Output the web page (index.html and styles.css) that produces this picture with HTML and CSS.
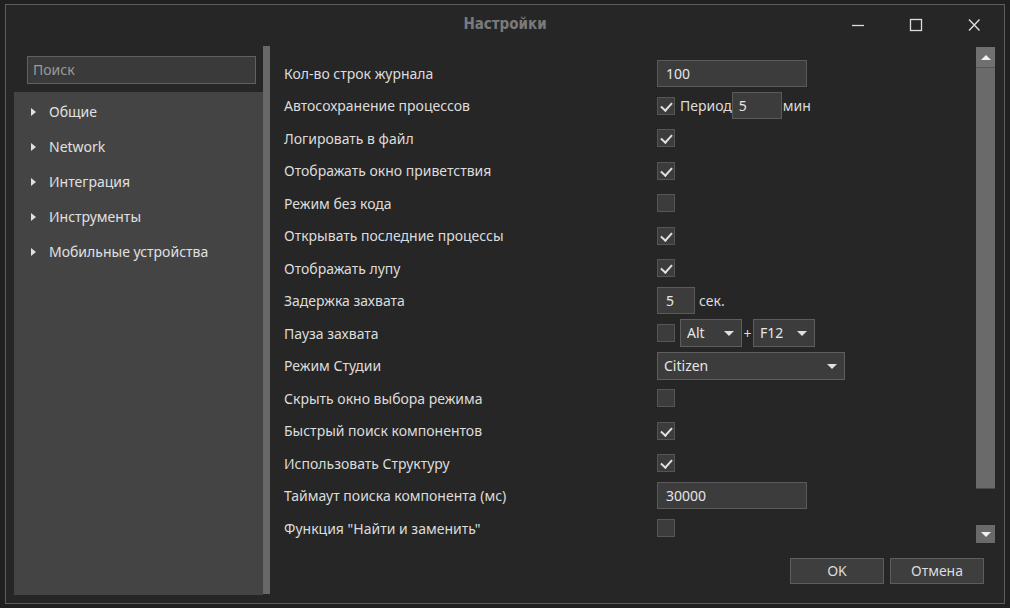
FILE: index.html
```html
<!DOCTYPE html>
<html lang="ru">
<head>
<meta charset="utf-8">
<title>Настройки</title>
<link rel="stylesheet" href="styles.css">
</head>
<body>
<div class="desk">
  <div class="window">
    <div class="titlebar">
      <div class="title">Настройки</div>
      <div class="controls">
        <span class="ctl"><svg width="14" height="14" viewBox="0 0 14 14"><path d="M1 7.5H13" stroke="#dcdcdc" stroke-width="1.3"/></svg></span>
        <span class="ctl"><svg width="14" height="14" viewBox="0 0 14 14"><rect x="1.5" y="1.5" width="11" height="11" fill="none" stroke="#dcdcdc" stroke-width="1.3"/></svg></span>
        <span class="ctl"><svg width="14" height="14" viewBox="0 0 14 14"><path d="M2 1.5L12.5 12.5M12.5 1.5L2 12.5" stroke="#dcdcdc" stroke-width="1.4"/></svg></span>
      </div>
    </div>
    <div class="main">
      <div class="left">
        <div class="search">Поиск</div>
        <div class="tree">
          <div class="node"><span class="arrow"></span>Общие</div>
          <div class="node"><span class="arrow"></span>Network</div>
          <div class="node"><span class="arrow"></span>Интеграция</div>
          <div class="node"><span class="arrow"></span>Инструменты</div>
          <div class="node"><span class="arrow"></span>Мобильные устройства</div>
        </div>
      </div>
      <div class="splitter"></div>
      <div class="right">
        <div class="scrollarea">
          <div class="rows">
            <div class="row"><div class="label">Кол-во строк журнала</div><div class="ctrl"><div class="input w150">100</div></div></div>
            <div class="row"><div class="label">Автосохранение процессов</div><div class="ctrl"><span class="cb on"></span><span class="txt">Период</span><div class="input w50">5</div><span class="txt t1">мин</span></div></div>
            <div class="row"><div class="label">Логировать в файл</div><div class="ctrl"><span class="cb on"></span></div></div>
            <div class="row"><div class="label">Отображать окно приветствия</div><div class="ctrl"><span class="cb on"></span></div></div>
            <div class="row"><div class="label">Режим без кода</div><div class="ctrl"><span class="cb"></span></div></div>
            <div class="row"><div class="label">Открывать последние процессы</div><div class="ctrl"><span class="cb on"></span></div></div>
            <div class="row"><div class="label">Отображать лупу</div><div class="ctrl"><span class="cb on"></span></div></div>
            <div class="row"><div class="label">Задержка захвата</div><div class="ctrl"><div class="input w38">5</div><span class="txt t4">сек.</span></div></div>
            <div class="row"><div class="label">Пауза захвата</div><div class="ctrl"><span class="cb"></span><div class="select w62">Alt<span class="caret"></span></div><span class="plus">+</span><div class="select w62">F12<span class="caret"></span></div></div></div>
            <div class="row"><div class="label">Режим Студии</div><div class="ctrl"><div class="select w188">Citizen<span class="caret"></span></div></div></div>
            <div class="row"><div class="label">Скрыть окно выбора режима</div><div class="ctrl"><span class="cb"></span></div></div>
            <div class="row"><div class="label">Быстрый поиск компонентов</div><div class="ctrl"><span class="cb on"></span></div></div>
            <div class="row"><div class="label">Использовать Структуру</div><div class="ctrl"><span class="cb on"></span></div></div>
            <div class="row"><div class="label">Таймаут поиска компонента (мс)</div><div class="ctrl"><div class="input w150">30000</div></div></div>
            <div class="row"><div class="label">Функция "Найти и заменить"</div><div class="ctrl"><span class="cb"></span></div></div>
          </div>
          <div class="scrollbar">
            <div class="sbtn up"><span class="tri-up"></span></div>
            <div class="thumb"></div>
            <div class="track"></div>
            <div class="sbtn down"><span class="tri-down"></span></div>
          </div>
        </div>
        <div class="footer">
          <div class="btn">OK</div>
          <div class="btn">Отмена</div>
        </div>
      </div>
    </div>
  </div>
</div>
</body>
</html>
```

FILE: styles.css
```css
* { box-sizing: border-box; }
html, body { margin: 0; padding: 0; }
body {
  background: #202020;
  width: 1010px;
  height: 608px;
  overflow: hidden;
  font-family: "Noto Sans", "Liberation Sans", Arial, sans-serif;
  font-size: 14px;
  line-height: 19px;
  color: #dcdcdc;
}
.desk { padding: 4px 0 0 5px; }
.window {
  width: 1000px;
  height: 600px;
  border: 1px solid #5e5e5e;
  background: #262626;
  display: flex;
  flex-direction: column;
}
.titlebar {
  height: 41px;
  flex: none;
  display: flex;
  align-items: center;
  position: relative;
}
.title {
  position: absolute;
  left: 0; right: 0; top: 11px;
  text-align: center;
  font-family: "Liberation Sans Narrow", "DejaVu Sans Condensed", "Liberation Sans", sans-serif;
  font-weight: bold;
  font-size: 15px;
  line-height: 17px;
  color: #7a7a7a;
}
.controls {
  margin-left: auto;
  margin-right: 23px;
  margin-top: -2px;
  display: flex;
  gap: 44px;
  position: relative;
  z-index: 1;
}
.ctl { width: 14px; height: 14px; display: block; }
.ctl svg { display: block; }
.main { flex: 1; display: flex; min-height: 0; }
.left {
  width: 257px;
  padding: 10px 0 8px 8px;
  display: flex;
  flex-direction: column;
}
.search {
  margin: 0 7px 0 13px;
  height: 28px;
  border: 1px solid #606060;
  background: #3a3a3a;
  color: #9a9a9a;
  padding: 4px 5px;
  line-height: 18px;
}
.tree {
  margin-top: 8px;
  flex: 1;
  background: #444444;
  padding-top: 2px;
}
.node {
  height: 35px;
  display: flex;
  align-items: center;
  padding-left: 17px;
  color: #e0e0e0;
}
.arrow {
  width: 0; height: 0;
  border-top: 4.5px solid transparent;
  border-bottom: 4.5px solid transparent;
  border-left: 5px solid #e0e0e0;
  margin-right: 13px;
}
.splitter {
  width: 7px;
  background: #686868;
  margin-bottom: 9px;
}
.right {
  flex: 1;
  display: flex;
  flex-direction: column;
  padding-top: 1px;
}
.scrollarea {
  height: 496px;
  display: flex;
}
.rows { flex: 1; padding: 9.75px 0 0 14px; }
.row {
  height: 32.5px;
  display: flex;
  align-items: center;
}
.label { width: 373px; color: #dcdcdc; white-space: nowrap; }
.ctrl { display: flex; align-items: center; }
.input {
  height: 27px;
  border: 1px solid #5a5a5a;
  background: #3c3c3c;
  padding: 0 8px;
  line-height: 25px;
  color: #e6e6e6;
}
.w150 { width: 150px; }
.w50 { width: 50px; padding-left: 6px; }
.w38 { width: 38px; }
.cb {
  width: 18px; height: 18px;
  border: 1px solid #555;
  background: #3c3c3c;
  display: block;
  position: relative;
}
.cb.on::after {
  content: "";
  position: absolute;
  left: 5px; top: 2px;
  width: 5px; height: 9px;
  border-right: 2px solid #e0e0e0;
  border-bottom: 2px solid #e0e0e0;
  transform: rotate(42deg);
}
.txt { margin-left: 5px; }
.t1 { margin-left: 1px; }
.t4 { margin-left: 4px; }
.select {
  height: 28px;
  border: 1px solid #5e5e5e;
  background: #3c3c3c;
  padding: 0 6px;
  line-height: 26px;
  display: flex;
  align-items: center;
  position: relative;
  color: #e6e6e6;
}
.ctrl .cb + .select { margin-left: 5px; }
.w62 { width: 62px; }
.w188 { width: 188px; }
.caret {
  position: absolute;
  right: 7px; top: 11px;
  width: 0; height: 0;
  border-left: 5px solid transparent;
  border-right: 5px solid transparent;
  border-top: 5px solid #e0e0e0;
}
.plus { width: 11px; text-align: center; }
.scrollbar {
  width: 19px;
  margin-right: 9px;
  display: flex;
  flex-direction: column;
}
.sbtn {
  height: 19px;
  background: #707070;
  display: flex;
  align-items: center;
  justify-content: center;
}
.sbtn.up { border-bottom: 1px solid #555; height: 21px; }
.thumb { height: 421px; background: #6a6a6a; border-bottom: 1px solid #4a4a4a; }
.track { flex: 1; }
.sbtn.down { height: 18px; background: #6a6a6a; }
.tri-up {
  width: 0; height: 0;
  border-left: 5px solid transparent;
  border-right: 5px solid transparent;
  border-bottom: 5px solid #f0f0f0;
}
.tri-down {
  width: 0; height: 0;
  border-left: 5px solid transparent;
  border-right: 5px solid transparent;
  border-top: 5px solid #f0f0f0;
}
.footer {
  display: flex;
  justify-content: flex-end;
  gap: 6px;
  padding: 15px 20px 0 0;
}
.btn {
  width: 94px;
  height: 26px;
  border: 1px solid #5e5e5e;
  background: #3e3e3e;
  text-align: center;
  line-height: 24px;
  color: #dcdcdc;
}
```
